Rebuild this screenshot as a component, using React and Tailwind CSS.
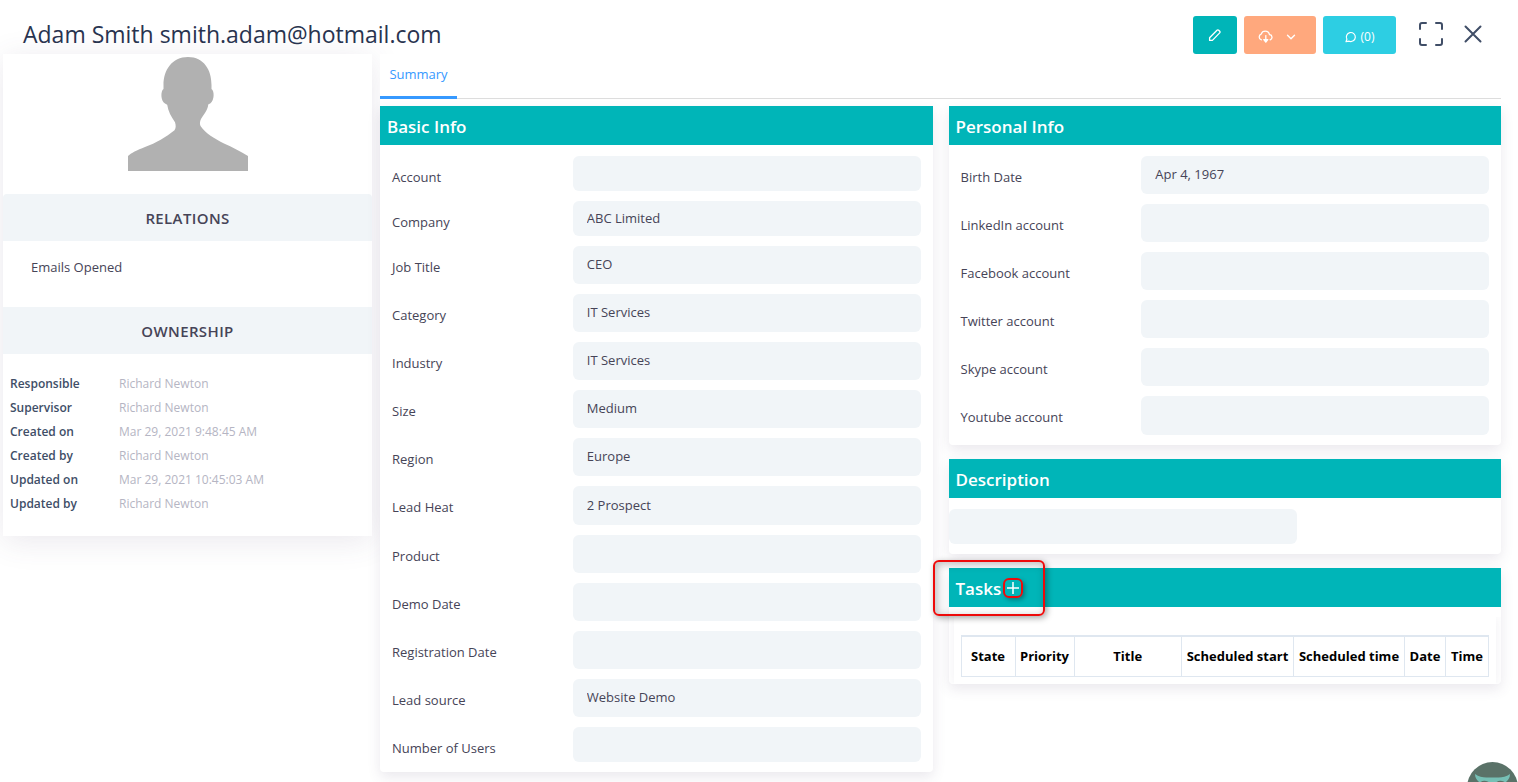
import React, { useId } from "react";

const basicFields = [
  ["Account", "", "h-[35px]"],
  ["Company", "ABC Limited", "h-[35px]"],
  ["Job Title", "CEO", "h-[38px]"],
  ["Category", "IT Services", "h-[38px]"],
  ["Industry", "IT Services", "h-[38px]"],
  ["Size", "Medium", "h-[38px]"],
  ["Region", "Europe", "h-[38px]"],
  ["Lead Heat", "2 Prospect", "h-[39px]"],
  ["Product", "", "h-[38px]"],
  ["Demo Date", "", "h-[38px]"],
  ["Registration Date", "", "h-[38px]"],
  ["Lead source", "Website Demo", "h-[38px]"],
  ["Number of Users", "", "h-[35px]"],
];

const personalFields = [
  ["Birth Date", "Apr 4, 1967", "h-[38px]"],
  ["LinkedIn account", "", "h-[38px]"],
  ["Facebook account", "", "h-[38px]"],
  ["Twitter account", "", "h-[38px]"],
  ["Skype account", "", "h-[38px]"],
  ["Youtube account", "", "h-[39px]"],
];

const ownership = [
  ["Responsible", "Richard Newton"],
  ["Supervisor", "Richard Newton"],
  ["Created on", "Mar 29, 2021 9:48:45 AM"],
  ["Created by", "Richard Newton"],
  ["Updated on", "Mar 29, 2021 10:45:03 AM"],
  ["Updated by", "Richard Newton"],
];

const taskColumns = [
  ["State", "w-[54px]"],
  ["Priority", "w-[59px]"],
  ["Title", "w-auto"],
  ["Scheduled start", "w-[112px]"],
  ["Scheduled time", "w-[111px]"],
  ["Date", "w-[41px]"],
  ["Time", "w-[43px]"],
];

function PencilIcon() {
  return (
    <svg width="14" height="14" viewBox="0 0 14 14" fill="none" stroke="currentColor" strokeWidth="1.3" strokeLinejoin="round" aria-hidden="true">
      <path d="M1.600 9.800 9 2.200a1.200 1.200 0 0 1 1.700 0l1 1a1.200 1.200 0 0 1 0 1.700L4.400 12.400H1.600z" />
    </svg>
  );
}

function CloudIcon() {
  return (
    <svg width="16" height="14" viewBox="0 0 16 14" fill="none" stroke="currentColor" strokeWidth="1.3" strokeLinecap="round" strokeLinejoin="round" aria-hidden="true">
      <path d="M3.400 9.800A3 3 0 0 1 1.200 6.900C1.200 5.500 2 4.500 3.200 4.100 3.800 2.300 5.300 1.200 7.200 1.200c2.200 0 3.900 1.500 4.300 3.500a2.600 2.600 0 0 1 .6 5.100" />
      <path d="M7.800 5.600v6" />
      <path d="M5.800 9.600h4L7.800 12z" fill="currentColor" />
    </svg>
  );
}

function ChevronIcon() {
  return (
    <svg width="10" height="6" viewBox="0 0 10 6" fill="none" stroke="currentColor" strokeWidth="1.4" strokeLinecap="round" strokeLinejoin="round" aria-hidden="true">
      <path d="M1.500 1.200 5 4.700 8.500 1.200" />
    </svg>
  );
}

function ChatIcon() {
  return (
    <svg width="12" height="12" viewBox="0 0 12 12" fill="none" stroke="currentColor" strokeWidth="1.2" strokeLinejoin="round" aria-hidden="true">
      <path d="M1 10.600 1.900 8.200A4.500 4.500 0 1 1 4.200 10.200z" />
    </svg>
  );
}

function ExpandIcon() {
  return (
    <svg width="24" height="24" viewBox="0 0 24 24" fill="none" stroke="currentColor" strokeWidth="2" strokeLinecap="round" strokeLinejoin="round" aria-hidden="true">
      <path d="M1 7V3a2 2 0 0 1 2-2h4M17 1h4a2 2 0 0 1 2 2v4M23 17v4a2 2 0 0 1-2 2h-4M7 23H3a2 2 0 0 1-2-2v-4" />
    </svg>
  );
}

function CloseIcon() {
  return (
    <svg width="18" height="18" viewBox="0 0 18 18" fill="none" stroke="currentColor" strokeWidth="2" strokeLinecap="round" aria-hidden="true">
      <path d="M1.500 1.500l15 15M16.500 1.500l-15 15" />
    </svg>
  );
}

function Avatar() {
  return (
    <svg width="120" height="114" viewBox="0 0 120 114" fill="#b1b1b1" role="img" aria-label="Contact photo">
      <path d="M60 0C44 0 35.500 13 35.500 28v4c-3 2-3 12 1.500 14.500l2.200 1.200c1 6.500 4 12 7.800 17.500 1 3 1 6-.5 8C38 80 28 86 17 90 9 93 3 96 0 99v15h120v-15C113 95 104 90 96 86.500 87 82 77 76 72.500 69c-1-2-.6-5 .5-7C77 56 80 52 80.200 47.500l2.300-1.200C86.500 43 86.500 34 83.500 32v-4C83.500 13 76 0 60 0z" />
    </svg>
  );
}

function Card({ title, action, children }) {
  return (
    <section className="relative rounded-b bg-white shadow-[0_5px_13px_rgba(82,63,105,0.12)]">
      <header className="flex h-[39px] items-center gap-0.5 bg-[#00b5b8] px-[7px] text-white">
        <h2 className="pt-0.5 text-[17px] leading-6 font-semibold">{title}</h2>
        {action}
      </header>
      {children}
    </section>
  );
}

function Field({ label, value, height }) {
  const id = useId();
  return (
    <div className="grid grid-cols-[13fr_25fr] items-start">
      <label htmlFor={id} className="pt-[11px] leading-5">
        {label}
      </label>
      <input id={id} readOnly defaultValue={value} className={`w-full min-w-0 rounded-md bg-[#f1f5f8] px-3.5 pb-0.5 outline-none ${height}`} />
    </div>
  );
}

function FieldList({ fields }) {
  return (
    <div className="flex flex-col gap-2.5 px-3 pt-[11px] pb-2.5">
      {fields.map(([label, value, height]) => (
        <Field key={label} label={label} value={value} height={height} />
      ))}
    </div>
  );
}

export default function App() {
  return (
    <div className="relative min-h-screen overflow-hidden bg-white pr-[17px] pl-[3px] font-['Open_Sans','Noto_Sans',sans-serif] text-[13px] text-[#464457]">
      <header className="flex h-[54px] items-end pl-5">
        <h1 className="flex-1 self-center pt-3.5 text-[23px] leading-8 text-[#293450]">Adam Smith smith.adam@hotmail.com</h1>
        <div className="flex items-center gap-[7px] text-white">
          <button aria-label="Edit" className="flex h-[38px] w-11 items-center justify-center rounded-[3px] bg-[#00b5b8]">
            <PencilIcon />
          </button>
          <button aria-label="Download" className="flex h-[38px] w-[72px] items-center justify-center gap-3 rounded-[3px] bg-[#ffa87d] pt-1 pr-1.5">
            <CloudIcon />
            <ChevronIcon />
          </button>
          <button aria-label="Comments" className="flex h-[38px] w-[73px] items-center justify-center gap-1 rounded-[3px] bg-[#2dcee3] pt-1 text-[12px]">
            <ChatIcon />
            (0)
          </button>
        </div>
        <div className="flex h-10 items-center gap-[21px] pr-[19px] pl-[23px] text-[#404e67]">
          <button aria-label="Full screen">
            <ExpandIcon />
          </button>
          <button aria-label="Close">
            <CloseIcon />
          </button>
        </div>
      </header>

      <div className="flex items-start gap-2">
        <aside className="w-[369px] shrink-0 bg-white shadow-[0_5px_30px_rgba(82,63,105,0.12)]">
          <div className="flex justify-center pt-[3px] pb-[23px]">
            <Avatar />
          </div>
          <h2 className="h-[47px] rounded-t bg-[#f1f5f8] pt-px text-center text-[15px] leading-[47px] font-semibold tracking-wide">RELATIONS</h2>
          <div className="h-[66px] px-7 pt-4 leading-5">
            <a href="#emails">Emails Opened</a>
          </div>
          <h2 className="h-[47px] bg-[#f1f5f8] pt-px text-center text-[15px] leading-[47px] font-semibold tracking-wide">OWNERSHIP</h2>
          <dl className="px-[7px] pt-[18px] pb-5 text-[12px] leading-6">
            {ownership.map(([name, value]) => (
              <div key={name} className="flex">
                <dt className="w-[109px] font-semibold text-[#404e67]">{name}</dt>
                <dd className="text-[#b5b5c3]">{value}</dd>
              </div>
            ))}
          </dl>
        </aside>

        <main className="relative min-w-0 flex-1 bg-white">
          <nav className="mb-[7px] flex h-[45px] items-end border-b border-[#dddddd]">
            <a href="#summary" className="-mb-px flex h-[45px] w-[77px] items-center justify-center border-b-[3px] border-[#3699ff] text-[#3699ff]">
              Summary
            </a>
          </nav>
          <div className="grid grid-cols-2 items-start gap-4">
            <Card title="Basic Info">
              <FieldList fields={basicFields} />
            </Card>
            <div className="flex flex-col gap-3.5">
              <Card title="Personal Info">
                <FieldList fields={personalFields} />
              </Card>
              <Card title="Description">
                <div className="pt-[11px] pb-2.5">
                  <input aria-label="Description" readOnly className="block h-[35px] w-[63%] rounded-md bg-[#f1f5f8] px-3.5 outline-none" />
                </div>
              </Card>
              <Card
                title="Tasks"
                action={
                  <button aria-label="Add task" className="relative flex size-5 items-center justify-center">
                    <svg width="14" height="14" viewBox="0 0 14 14" stroke="white" strokeWidth="1.5" aria-hidden="true">
                      <path d="M7 1v12M1 7h12" />
                    </svg>
                    <span className="absolute inset-0 rounded-md border-2 border-[#ee0a0a] shadow-[2px_2px_4px_rgba(0,0,0,0.3)]" />
                  </button>
                }
              >
                <div className="px-[5px] pt-2.5">
                  <div className="px-[7px] pt-[18px] pb-[7px] shadow-[0_0_10px_rgba(82,63,105,0.08)] [clip-path:inset(0_-5px)]">
                    <table className="w-full table-fixed border-collapse text-[13px] font-bold text-black">
                      <thead>
                        <tr>
                          {taskColumns.map(([name, width]) => (
                            <th key={name} className={`h-10 border border-t-2 border-[#dfe7f0] p-0 whitespace-nowrap ${width}`}>
                              {name}
                            </th>
                          ))}
                        </tr>
                      </thead>
                    </table>
                  </div>
                </div>
                <span className="pointer-events-none absolute -top-2 -left-4 h-14 w-28 rounded-md border-2 border-[#ee0a0a] shadow-[2px_2px_6px_rgba(0,0,0,0.35),inset_2px_2px_8px_rgba(0,0,0,0.25)]" />
              </Card>
            </div>
          </div>
        </main>
      </div>

      <button aria-label="Open help" className="fixed right-0 -bottom-[31px] size-[51px] overflow-hidden rounded-full bg-[#5a7268]">
        <svg width="51" height="51" viewBox="0 0 51 51" aria-hidden="true">
          <path d="M8 12c4 3 8 3.600 12 3.500h11c4 .1 8-.5 12-3.500 0 4-2 6-4 8v22H12V20c-2-2-4-4-4-8z" fill="#76c0b5" />
          <path d="M14 20.500q3-2 7 0M30 20.500q3-2 7 0" stroke="#5a7268" strokeWidth="1.500" fill="none" />
        </svg>
      </button>
    </div>
  );
}
